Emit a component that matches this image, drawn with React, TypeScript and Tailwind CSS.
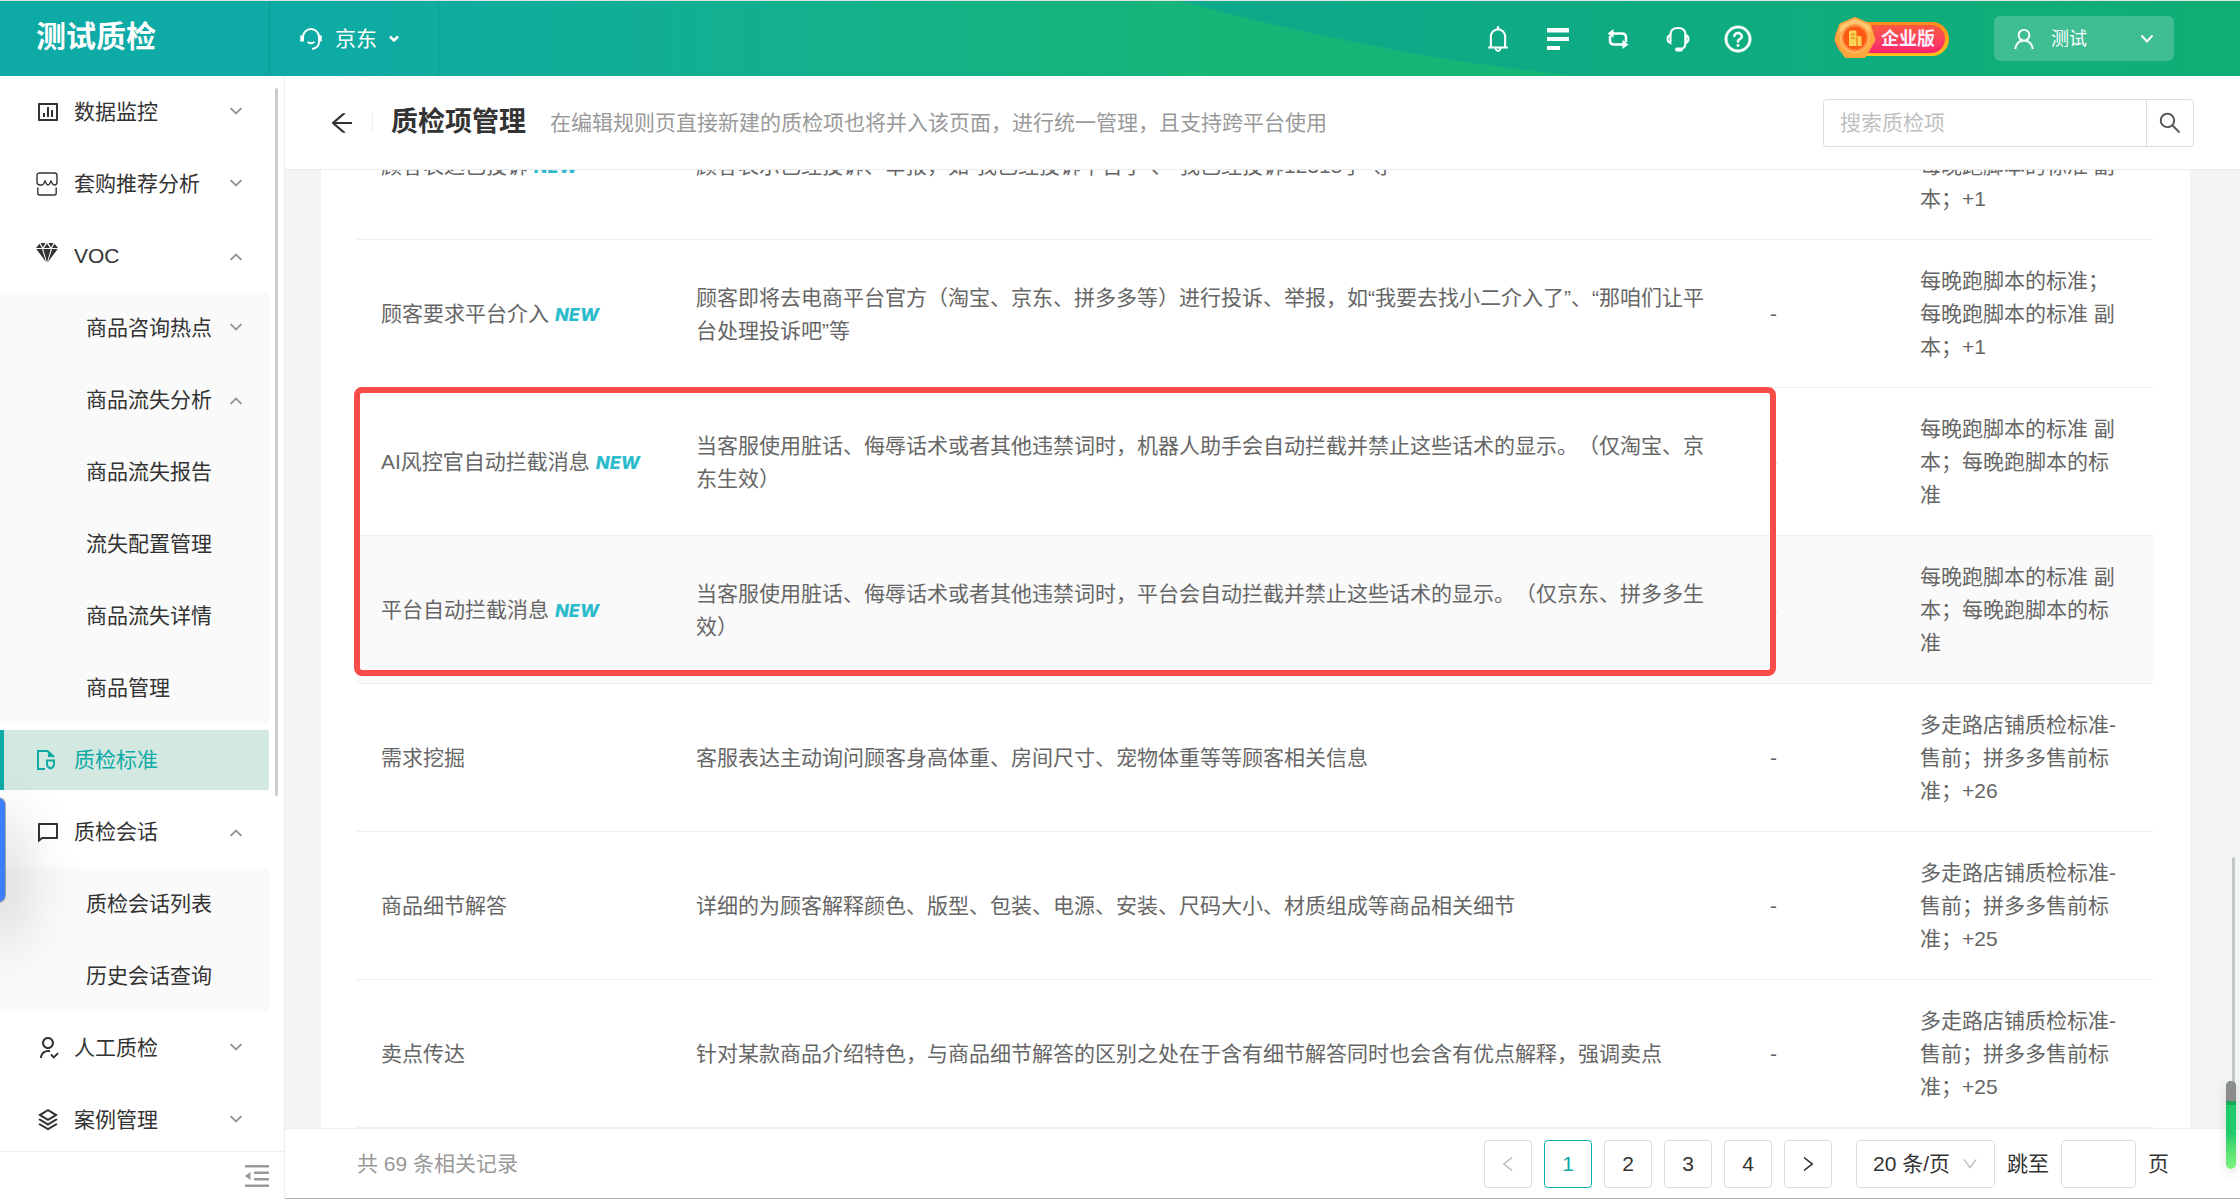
import { ReactNode } from 'react';
import {
    AiOutlineArrowLeft,
    AiOutlineBell,
    AiOutlineDown,
    AiOutlineLeft,
    AiOutlineQuestionCircle,
    AiOutlineRight,
    AiOutlineSearch,
    AiOutlineUser,
} from 'react-icons/ai';
import {
    RiBarChartBoxLine,
    RiChat4Line,
    RiStackLine,
    RiUserFollowLine,
} from 'react-icons/ri';

interface MenuItem {
    label: string;
    icon?: ReactNode;
    arrow?: 'up' | 'down';
    active?: boolean;
    children?: MenuItem[];
}

interface QualityItem {
    name: string;
    isNew?: boolean;
    hovered?: boolean;
    description: string;
    standards: string;
}

function StoreIcon() {
    return (
        <svg viewBox="0 0 22 24" className="w-[22px] h-6" fill="none" stroke="currentColor" strokeWidth="1.4">
            <path d="M3.500 1h15q2.500 0 2.500 2.500V10q0 3-2.500 3-1.700 0-2.500-2l-1-2-1 2q-.8 2-2 2t-2-2l-1-2-1 2q-.8 2-2 2H4Q1 13 1 10V3.500Q1 1 3.500 1z" />
            <path d="M1.800 15.500V21q0 2 2 2h14.400q2 0 2-2v-5.500" />
        </svg>
    );
}

function DiamondIcon() {
    return (
        <svg viewBox="0 0 22 20" className="mb-1.5 w-[22px] h-5" fill="currentColor">
            <path d="M4.500 0h5L7 4.500zM12.500 0h5L15 4.500zM11 .5l3 4.500H8zM3.500.8L6 5H0zM18.500.8L22 5h-6zM.3 6H6l4 13zM7.200 6h7.600L11 19.500zM16 6h5.700L12 19z" />
        </svg>
    );
}

function StandardIcon() {
    return (
        <svg viewBox="0 0 20 22" className="w-5 h-[22px]" fill="none" stroke="currentColor" strokeWidth="2">
            <path d="M9 20H2V2h9.500L18 8" />
            <path d="M12 1.500L18.500 8H12z" fill="currentColor" stroke="none" />
            <path d="M11 11.500h7v4q0 2.500-3.500 4-3.500-1.500-3.500-4z" />
        </svg>
    );
}

function CollapseIcon() {
    return (
        <svg viewBox="0 0 24 22" className="w-6 h-[22px]" fill="currentColor">
            <path d="M0 0h24v2.500H0zM9 6.500h15V9H9zM9 13h15v2.500H9zM0 19.500h24V22H0zM0 11l5.500-4v8z" />
        </svg>
    );
}

function HeadsetIcon() {
    return (
        <svg viewBox="0 0 24 24" className="w-6 h-6" fill="none" stroke="currentColor" strokeWidth="2">
            <path d="M4 14V10a8 8 0 0 1 16 0v5q0 6-7 7" />
            <path d="M3 8.500v6M21 8.500v6" strokeWidth="3.500" />
            <path d="M8.500 15q3.500 2.500 7 0" />
        </svg>
    );
}

function ServiceIcon() {
    return (
        <svg viewBox="0 0 24 26" className="w-6 h-[26px]" fill="none" stroke="currentColor" strokeWidth="2">
            <path d="M4.500 9V8.500q0-6.500 7.500-6.500t7.500 6.500V17q0 5-5 6.500" />
            <path d="M4.500 9v8Q1.500 16 1.500 13t3-4zM19.500 9v8q3-1 3-4t-3-4z" />
            <path d="M11 23.500h4" strokeWidth="4" strokeLinecap="round" />
        </svg>
    );
}

function SwitchIcon() {
    return (
        <svg viewBox="0 0 24 20" className="w-6 h-5" fill="none" stroke="currentColor" strokeWidth="2.500">
            <path d="M5 4.500h11q4 0 4 4V13M19 15.500H8q-4 0-4-4V7" />
            <path d="M7.500 0v9L1.500 4.500zM16.500 11v9l6-4.500z" fill="currentColor" stroke="none" />
        </svg>
    );
}

const menu: MenuItem[] = [
    { label: '数据监控', icon: <RiBarChartBoxLine className="size-6" />, arrow: 'down' },
    { label: '套购推荐分析', icon: <StoreIcon />, arrow: 'down' },
    {
        label: 'VOC',
        icon: <DiamondIcon />,
        arrow: 'up',
        children: [
            { label: '商品咨询热点', arrow: 'down' },
            { label: '商品流失分析', arrow: 'up' },
            { label: '商品流失报告' },
            { label: '流失配置管理' },
            { label: '商品流失详情' },
            { label: '商品管理' },
        ],
    },
    { label: '质检标准', icon: <StandardIcon />, active: true },
    {
        label: '质检会话',
        icon: <RiChat4Line className="size-6" />,
        arrow: 'up',
        children: [{ label: '质检会话列表' }, { label: '历史会话查询' }],
    },
    { label: '人工质检', icon: <RiUserFollowLine className="size-6" />, arrow: 'down' },
    { label: '案例管理', icon: <RiStackLine className="size-6" />, arrow: 'down' },
];

const items: QualityItem[] = [
    {
        name: '顾客表达已投诉',
        isNew: true,
        description: '顾客表示已经投诉、举报，如“我已经投诉平台了”、“我已经投诉12315了”等',
        standards: '每晚跑脚本的标准；每晚跑脚本的标准 副本；+1',
    },
    {
        name: '顾客要求平台介入',
        isNew: true,
        description:
            '顾客即将去电商平台官方（淘宝、京东、拼多多等）进行投诉、举报，如“我要去找小二介入了”、“那咱们让平台处理投诉吧”等',
        standards: '每晚跑脚本的标准；每晚跑脚本的标准 副本；+1',
    },
    {
        name: 'AI风控官自动拦截消息',
        isNew: true,
        description:
            '当客服使用脏话、侮辱话术或者其他违禁词时，机器人助手会自动拦截并禁止这些话术的显示。（仅淘宝、京东生效）',
        standards: '每晚跑脚本的标准 副本；每晚跑脚本的标准',
    },
    {
        name: '平台自动拦截消息',
        isNew: true,
        hovered: true,
        description:
            '当客服使用脏话、侮辱话术或者其他违禁词时，平台会自动拦截并禁止这些话术的显示。（仅京东、拼多多生效）',
        standards: '每晚跑脚本的标准 副本；每晚跑脚本的标准',
    },
    {
        name: '需求挖掘',
        description: '客服表达主动询问顾客身高体重、房间尺寸、宠物体重等等顾客相关信息',
        standards: '多走路店铺质检标准-售前；拼多多售前标准；+26',
    },
    {
        name: '商品细节解答',
        description: '详细的为顾客解释颜色、版型、包装、电源、安装、尺码大小、材质组成等商品相关细节',
        standards: '多走路店铺质检标准-售前；拼多多售前标准；+25',
    },
    {
        name: '卖点传达',
        description: '针对某款商品介绍特色，与商品细节解答的区别之处在于含有细节解答同时也会含有优点解释，强调卖点',
        standards: '多走路店铺质检标准-售前；拼多多售前标准；+25',
    },
];

function Arrow({ dir }: { dir: 'up' | 'down' }) {
    return (
        <svg
            viewBox="0 0 14 18"
            className="absolute right-[26px] top-[27px] h-[18px] w-3.5"
            fill="none"
            stroke="#999"
            strokeWidth="1.800"
        >
            <path d={dir === 'up' ? 'M1.500 13L7 7.500l5.500 5.500' : 'M1.500 5L7 10.500 12.500 5'} />
        </svg>
    );
}

function MenuRow({ item }: { item: MenuItem }) {
    return (
        <li>
            <a
                href="#"
                className={
                    item.active
                        ? 'relative my-1.5 flex h-[60px] items-center border-l-4 border-[#0eaaa6] bg-[#d2e8e1] pl-8 text-[#0eaaa6]'
                        : 'relative flex h-[72px] items-center pl-9'
                }
            >
                <span className="flex w-[38px] items-center">{item.icon}</span>
                {item.label}
                {item.arrow && <Arrow dir={item.arrow} />}
            </a>
            {item.children && (
                <ul className="bg-[#fafafa]">
                    {item.children.map((child) => (
                        <li key={child.label}>
                            <a href="#" className="relative flex h-[72px] items-center pl-[86px]">
                                {child.label}
                                {child.arrow && <Arrow dir={child.arrow} />}
                            </a>
                        </li>
                    ))}
                </ul>
            )}
        </li>
    );
}

function EnterpriseBadge() {
    return (
        <div className="relative h-[34px] w-[114px] rounded-full bg-linear-to-b from-[#ff8a1c] to-[#ffc21a] py-[3px] pr-1">
            <div className="flex h-full items-center justify-end rounded-full bg-linear-to-b from-[#fb5a3c] to-[#f81c70] pr-2.5 text-lg font-bold text-[#fdeeff]">
                企业版
            </div>
            <svg viewBox="0 0 42 44" className="absolute -left-px -top-1.5 h-11 w-[42px]">
                <path
                    d="M21 3L35 9 39.500 24 30 40H12L2.500 24 7 9z"
                    fill="#ffa63e"
                    stroke="#ffa63e"
                    strokeWidth="4"
                    strokeLinejoin="round"
                />
                <path d="M21 3L35 9l3 8L21 6 5 17 7 9z" fill="#ffc873" />
                <circle cx="21" cy="22" r="14.500" fill="#ff9340" stroke="#ffcf7d" />
                <circle cx="21" cy="22" r="11.500" fill="#fb5a14" />
                <path d="M15 16q0-1.500 1.500-1.500H21q1.500 0 1.500 1.500v4H26q1.500 0 1.500 1.500V30H15z" fill="#ffd257" />
                <path d="M17 18.500h3.500M17 22h3.500M23 20.500V30" stroke="#ee8a1c" strokeWidth="1.500" />
            </svg>
        </div>
    );
}

function TopBar() {
    return (
        <header className="relative flex h-[76px] shrink-0 items-center border-t border-[#dde5e4] bg-linear-to-r from-[#0eaaa6] via-[#0da88d] to-[#10ae74] text-white">
            <svg viewBox="0 0 2240 75" preserveAspectRatio="none" className="absolute inset-0 size-full">
                <defs>
                    <linearGradient id="swoosh" gradientUnits="userSpaceOnUse" x1="300" y1="0" x2="1220" y2="0">
                        <stop offset="0" stopColor="#0eaaa6" />
                        <stop offset="1" stopColor="#16b577" />
                    </linearGradient>
                </defs>
                <path d="M0 0h1180q208 56 397 75H0z" fill="url(#swoosh)" />
            </svg>
            <h1 className="relative w-[269px] pb-1 pl-9 text-3xl font-bold">测试质检</h1>
            <button type="button" className="relative flex h-full w-[170px] items-center border-x border-[#0b9c95] pl-[29px]">
                <HeadsetIcon />
                <span className="ml-3 text-[21px]">京东</span>
                <svg viewBox="0 0 10 8" className="ml-3 w-2.5" fill="none" stroke="currentColor" strokeWidth="2.500">
                    <path d="M1 1.500l4 4 4-4" />
                </svg>
            </button>
            <nav className="relative ml-auto flex items-center gap-[30px]">
                <button type="button" aria-label="通知" className="flex w-[30px] justify-center"><AiOutlineBell className="size-[30px]" /></button>
                <button type="button" aria-label="列表" className="flex w-[30px] justify-center">
                    <svg viewBox="0 0 24 24" className="size-6" fill="currentColor">
                        <path d="M1 1h22v4.500H1zM1 10h22v4H1zM1 19h13v4H1z" />
                    </svg>
                </button>
                <button type="button" aria-label="切换" className="flex w-[30px] justify-center"><SwitchIcon /></button>
                <button type="button" aria-label="客服" className="flex w-[30px] justify-center"><ServiceIcon /></button>
                <button type="button" aria-label="帮助" className="flex w-[30px] justify-center">
                    <AiOutlineQuestionCircle className="size-[30px]" stroke="currentColor" strokeWidth="24" />
                </button>
            </nav>
            <div className="relative ml-[82px] mr-[45px]">
                <EnterpriseBadge />
            </div>
            <button
                type="button"
                className="relative mr-[66px] flex h-[45px] w-[180px] items-center rounded-md bg-white/20 pl-[17px] pr-5 text-lg"
            >
                <AiOutlineUser className="mr-3.5 size-[26px]" />
                测试
                <svg viewBox="0 0 14 10" className="ml-auto w-3.5" fill="none" stroke="currentColor" strokeWidth="2">
                    <path d="M1.500 1.500L7 7.500l5.500-6" />
                </svg>
            </button>
        </header>
    );
}

function Sidebar() {
    return (
        <aside className="flex w-[285px] shrink-0 flex-col border-r border-[#eee] bg-white text-[21px] text-[#333]">
            <div className="relative min-h-0 flex-1 overflow-hidden pr-[15px]">
                <ul>
                    {menu.map((item) => (
                        <MenuRow key={item.label} item={item} />
                    ))}
                </ul>
                <div className="absolute right-1.5 top-3 h-[708px] w-[3px] rounded bg-[#ccc]" />
                {/* floating handle on the window edge */}
                <div className="absolute -left-2 top-[722px] h-[104px] w-[13px] rounded-lg bg-[#3f7dff] shadow-[0_30px_60px_10px_rgba(0,0,0,0.22),0_0_0_1px_rgba(0,0,0,0.3)]" />
            </div>
            <div className="flex h-12 shrink-0 items-center justify-end border-t border-[#eee] pr-[15px] text-[#999]">
                <button type="button" aria-label="收起菜单"><CollapseIcon /></button>
            </div>
        </aside>
    );
}

function PageHeader() {
    return (
        <div className="flex h-[94px] shrink-0 items-center border-b border-[#ebebeb] bg-white pl-[43px] pr-[46px]">
            <button type="button" aria-label="返回"><AiOutlineArrowLeft className="size-7 text-[#333]" /></button>
            <span className="ml-4 h-5 w-px bg-[#eee]" />
            <h2 className="ml-[18px] text-[27px] font-bold text-[#333]">质检项管理</h2>
            <p className="ml-6 text-[21px] text-[#999]">
                在编辑规则页直接新建的质检项也将并入该页面，进行统一管理，且支持跨平台使用
            </p>
            <div className="ml-auto flex h-12">
                <input
                    type="text"
                    aria-label="搜索质检项"
                    placeholder="搜索质检项"
                    className="w-[323px] rounded-l border border-r-0 border-[#ddd] px-4 text-[21px] placeholder:text-[#bfbfbf]"
                />
                <button
                    type="button"
                    aria-label="搜索"
                    className="flex w-12 items-center justify-center rounded-r border border-[#ddd] text-[#555]"
                >
                    <AiOutlineSearch className="size-[26px]" />
                </button>
            </div>
        </div>
    );
}

function QualityTable() {
    return (
        <table className="w-full table-fixed text-left text-[21px] leading-[33px] text-[#666]">
            <colgroup>
                <col className="w-[315px]" />
                <col />
                <col className="w-[150px]" />
                <col className="w-[257px]" />
            </colgroup>
            <tbody>
                {items.map((item) => (
                    <tr
                        key={item.name}
                        className={item.hovered ? 'h-[148px] border-b border-[#eee] bg-[#fafafa]' : 'h-[148px] border-b border-[#eee]'}
                    >
                        <td className="px-6">
                            {item.name}
                            {item.isNew && (
                                <span className="ml-1.5 font-['Inter'] text-lg font-extrabold italic text-[#2bbccb]">NEW</span>
                            )}
                        </td>
                        <td className="px-6">{item.description}</td>
                        <td className="px-6">-</td>
                        <td className="px-6">{item.standards}</td>
                    </tr>
                ))}
            </tbody>
        </table>
    );
}

function Pagination() {
    const cell = 'flex size-12 items-center justify-center rounded border';

    return (
        <footer className="flex h-[71px] shrink-0 items-center gap-3 border-t border-[#eee] border-b border-b-[#b5b5b5] bg-white pl-[72px] pr-[71px] text-[21px] text-[#333]">
            <span className="mr-auto text-[#999]">共 69 条相关记录</span>
            <button type="button" aria-label="上一页" disabled className={`${cell} border-[#ddd] text-[#bfbfbf]`}>
                <AiOutlineLeft className="size-5" />
            </button>
            {[1, 2, 3, 4].map((page) => (
                <button
                    key={page}
                    type="button"
                    className={`${cell} ${page === 1 ? 'border-[#0eaaa6] text-[#0eaaa6]' : 'border-[#ddd]'}`}
                >
                    {page}
                </button>
            ))}
            <button type="button" aria-label="下一页" className={`${cell} border-[#ddd]`}>
                <AiOutlineRight className="size-5" />
            </button>
            <div className="relative ml-3">
                <select aria-label="每页条数" className="h-12 w-[139px] appearance-none rounded border border-[#ddd] pl-4">
                    <option>20 条/页</option>
                </select>
                <AiOutlineDown className="pointer-events-none absolute right-4 top-[15px] size-[18px] text-[#bfbfbf]" />
            </div>
            <label htmlFor="jump">跳至</label>
            <input id="jump" type="text" className="h-12 w-[75px] rounded border border-[#ddd] px-2" />
            <span>页</span>
        </footer>
    );
}

export default function App() {
    return (
        <div className="flex h-screen flex-col overflow-hidden bg-[#f3f5f4] font-['Liberation_Sans','Noto_Sans_CJK_SC',sans-serif] [text-spacing-trim:space-all]">
            <TopBar />
            <div className="flex min-h-0 flex-1">
                <Sidebar />
                <main className="relative flex min-w-0 flex-1 flex-col">
                    <PageHeader />
                    {/* list is scrolled to its end */}
                    <div className="flex min-h-0 flex-1 flex-col justify-end overflow-hidden pl-9 pr-[50px]">
                        <div className="relative bg-white pl-9 pr-[37px]">
                            <QualityTable />
                            <div className="absolute bottom-[452px] left-[33px] right-[414px] h-[289px] rounded-lg border-[6px] border-[#f94b48]" />
                        </div>
                    </div>
                    <Pagination />
                    <div className="absolute bottom-[70px] right-[5px] h-[272px] w-[3px] rounded bg-[#c4c8c6]" />
                    <div className="absolute bottom-[30px] right-1 h-[88px] w-2.5 overflow-hidden rounded-full bg-linear-to-b from-[#1fcb6b] from-60% to-[#7df57e] shadow-[0_4px_12px_rgba(0,0,0,0.12)]">
                        <div className="h-6 border-b-4 border-[#19a957] bg-[#8c8c8c]" />
                    </div>
                </main>
            </div>
        </div>
    );
}
